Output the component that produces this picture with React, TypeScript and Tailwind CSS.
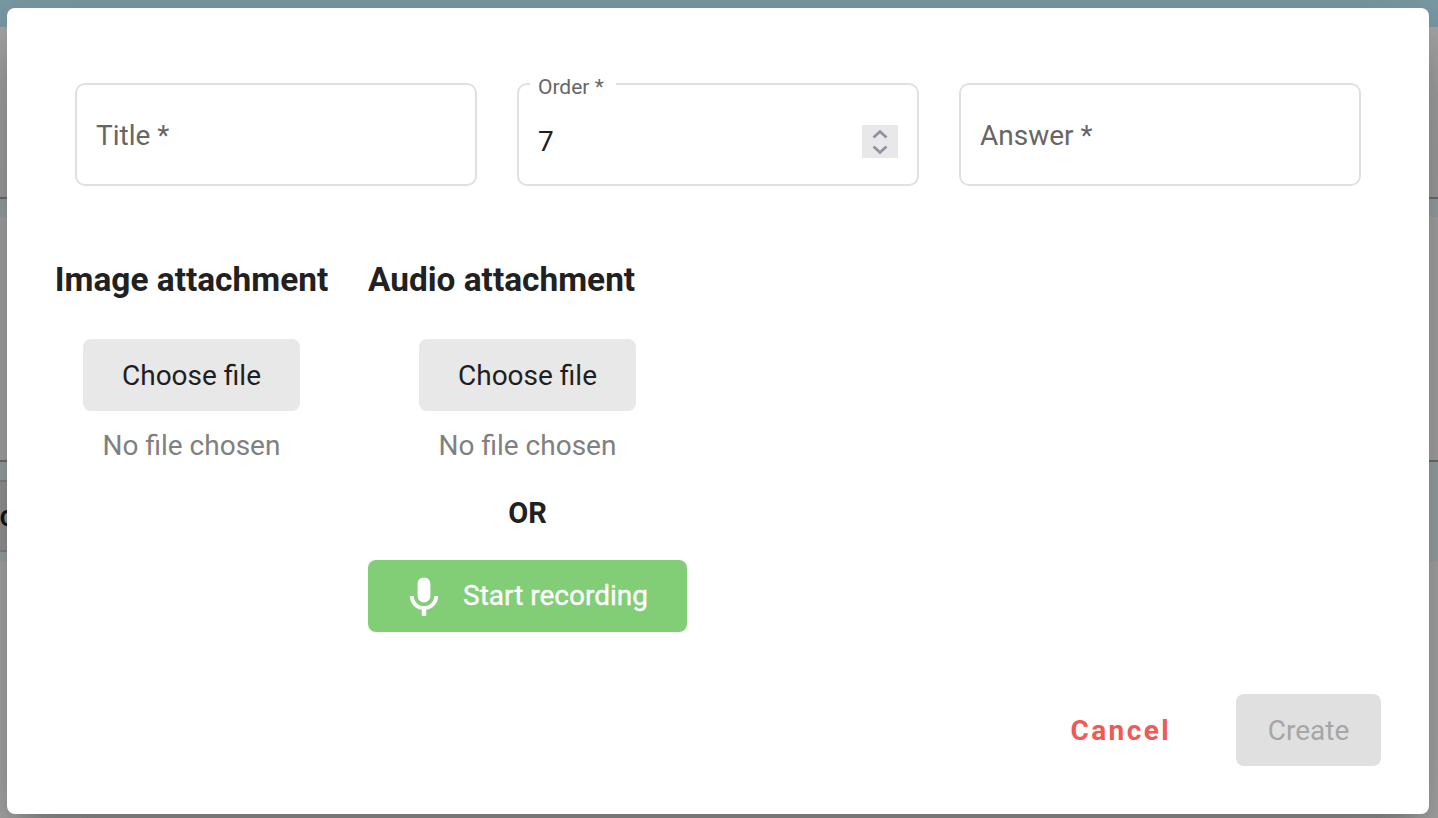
import type { ReactNode } from 'react';

function Field({ children }: { children: ReactNode }) {
  return (
    <div className="relative flex h-[103px] w-[402px] items-center rounded-[10px] border-2 border-[#e0e0e0] px-[19px] text-[28px] text-[#666666]">
      {children}
    </div>
  );
}

function FilePicker() {
  return (
    <div className="flex flex-col items-center">
      <button className="h-[72px] w-[217px] rounded-lg bg-[#e8e8e8] pt-[2px] text-[28px] text-[#1f1f1f]">Choose file</button>
      <span className="mt-[15px] text-[28px] leading-[40px] text-[#808080]">No file chosen</span>
    </div>
  );
}

function Backdrop() {
  return (
    <div className="absolute inset-0 flex flex-col">
      <div className="h-[27px] shrink-0 bg-[#7b9ca7]" />
      <div className="h-[170px] shrink-0 bg-linear-to-b from-[#a9a9a9] to-[#a5a5a5]" />
      <div className="h-[2px] shrink-0 bg-[#707474]" />
      <div className="h-[18px] shrink-0 bg-[#9fa8ab]" />
      <div className="h-[243px] shrink-0 bg-[#ababab]" />
      <div className="h-[2px] shrink-0 bg-[#707474]" />
      <div className="flex h-[100px] shrink-0 flex-col bg-[#a0a9ac] pt-[18px]">
        <div className="flex h-[72px] w-[100px] items-center border-y-2 border-[#8a8a8a] bg-[#9c9c9c] text-[30px] font-medium text-[#151515]">
          <span className="-mt-[2px] -ml-[0.5px]">c</span>
        </div>
      </div>
      <div className="flex-1 bg-[#adadad]" />
    </div>
  );
}

export default function App() {
  return (
    <div className="relative h-[818px] w-[1438px] overflow-hidden bg-[#a8a8a8] font-['Roboto',sans-serif] antialiased">
      <Backdrop />
      <div className="absolute top-[8px] left-[7px] flex h-[806px] w-[1422px] flex-col rounded-lg bg-white pt-[75px] pr-[48px] pb-[48px] pl-[48px] shadow-[0_22px_30px_-14px_rgba(0,0,0,0.2),0_48px_76px_6px_rgba(0,0,0,0.14),0_18px_92px_16px_rgba(0,0,0,0.12)]">
        <div className="flex gap-[40px] pl-[20px]">
          <Field>
            <span className="mt-[2px]">Title *</span>
          </Field>
          <Field>
            <span className="absolute -top-[11px] left-[11px] bg-white pr-[12px] pl-[8px] text-[21px] leading-[26px]">Order *</span>
            <span className="mt-[15px] flex-1 text-[#1f1f1f]">7</span>
            <span className="mt-[13px] flex h-[33px] w-[36px] items-center justify-center bg-[#e8e8ea]">
              <svg width="36" height="33" viewBox="0 0 36 33" fill="none" stroke="#9090a0" strokeWidth="2.7">
                <path d="M11.5 12.5 18 6.5l6.5 6M11.5 21.5l6.5 6 6.5-6" />
              </svg>
            </span>
          </Field>
          <Field>
            <span className="mt-[2px]">Answer *</span>
          </Field>
        </div>
        <div className="mt-[70px] flex gap-[40px] text-[#212121]">
          <section className="flex w-[273px] flex-col items-center">
            <h3 className="mb-[35px] text-[33.4px] leading-[48px] font-bold whitespace-nowrap">Image attachment</h3>
            <FilePicker />
          </section>
          <section className="flex w-[319px] flex-col items-center">
            <h3 className="mb-[35px] self-start text-[33.4px] leading-[48px] font-bold whitespace-nowrap">Audio attachment</h3>
            <FilePicker />
            <strong className="mt-[27px] text-[29px] leading-[40px] font-bold">OR</strong>
            <button className="mt-[27px] flex h-[72px] w-[319px] items-center rounded-lg bg-[#81ce77] pl-[32px] text-[28px] text-white">
              <svg className="mt-[4px] mr-[15px] shrink-0" width="48" height="48" viewBox="0 0 24 24" fill="currentColor">
                <path d="M12 14.200c1.770 0 3.200-1.430 3.200-3.200V5c0-1.770-1.430-3.200-3.200-3.200S8.800 3.230 8.800 5v6c0 1.770 1.430 3.200 3.200 3.200zm5.100-3.200c0 2.810-2.290 5.100-5.100 5.100s-5.100-2.290-5.100-5.100H4.900c0 3.530 2.610 6.430 6 6.920V21h2.200v-3.080c3.390-.49 6-3.390 6-6.920h-2z" />
              </svg>
              <span className="[-webkit-text-stroke:0.35px_white]">Start recording</span>
            </button>
          </section>
        </div>
        <div className="mt-auto flex items-center justify-end text-[28px]">
          <button className="mr-[65px] pt-[2px] font-bold tracking-[2.400px] text-[#ef5a55]">Cancel</button>
          <button className="h-[72px] w-[145px] rounded-lg bg-[#e0e0e0] pt-[2px] text-[#a6a6a6]">Create</button>
        </div>
      </div>
    </div>
  );
}
